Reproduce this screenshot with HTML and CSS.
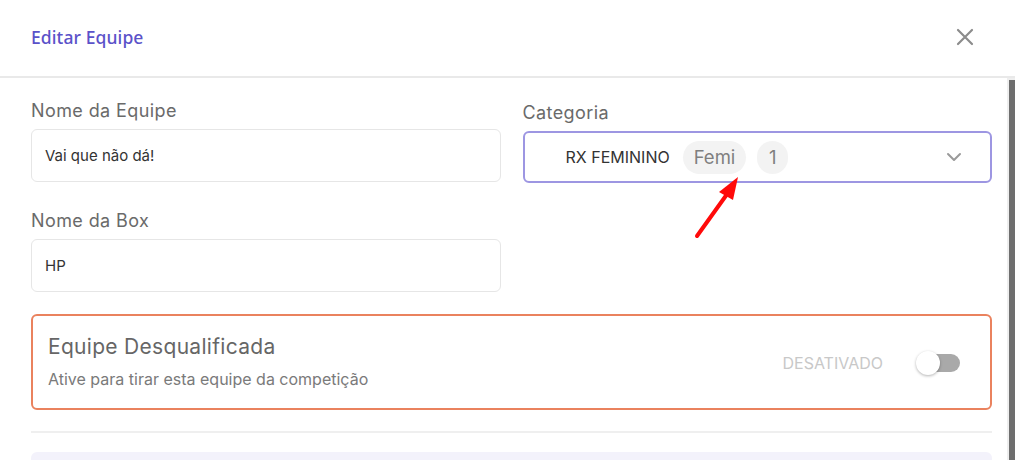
FILE: index.html
```html
<!DOCTYPE html>
<html lang="pt-BR">
<head>
<meta charset="utf-8">
<title>Editar Equipe</title>
<link rel="stylesheet" href="styles.css">
</head>
<body>
<div class="modal">
  <header class="modal-header">
    <h2 class="modal-title">Editar Equipe</h2>
    <button class="close-btn" aria-label="Fechar">
      <svg width="18" height="18" viewBox="0 0 18 18"><path d="M2 2 L16 16 M16 2 L2 16" stroke="#8c8c8c" stroke-width="2.2" stroke-linecap="round" fill="none"/></svg>
    </button>
  </header>
  <div class="modal-body">
    <div class="content">
      <div class="fields">
        <div class="field">
          <label class="field-label">Nome da Equipe</label>
          <div class="input">Vai que não dá!</div>
        </div>
        <div class="field field-right">
          <label class="field-label">Categoria</label>
          <div class="select">
            <span class="select-value">RX FEMININO</span>
            <span class="chip">Femi</span>
            <span class="chip chip-round">1</span>
            <svg class="chevron" width="16" height="10" viewBox="0 0 16 10"><path d="M2 2 L8 8 L14 2" stroke="#9a9a9a" stroke-width="2" fill="none" stroke-linecap="round" stroke-linejoin="round"/></svg>
          </div>
        </div>
        <div class="field">
          <label class="field-label">Nome da Box</label>
          <div class="input">HP</div>
        </div>
      </div>
      <div class="danger-card">
        <div class="danger-text">
          <div class="danger-title">Equipe Desqualificada</div>
          <div class="danger-sub">Ative para tirar esta equipe da competição</div>
        </div>
        <div class="toggle-wrap">
          <span class="toggle-label">DESATIVADO</span>
          <span class="toggle"><span class="knob"></span></span>
        </div>
      </div>
      <div class="divider"></div>
      <div class="footer-box"></div>
    </div>
    <div class="scrollbar"><div class="scroll-thumb"></div></div>
  </div>
  <svg class="annotation-arrow" width="60" height="72" viewBox="0 0 60 72">
    <path d="M7 64 L40 18" stroke="#ff0a0a" stroke-width="4" stroke-linecap="round" fill="none"/>
    <path d="M48 5 L29 20 L43 28 Z" fill="#ff0a0a"/>
  </svg>
</div>
</body>
</html>
```
FILE: styles.css
```css
* { box-sizing: border-box; }
html, body { margin: 0; padding: 0; background: #fff; }
body { font-family: Inter, "Noto Sans", "Liberation Sans", sans-serif; color: #333; }

.modal {
  position: relative;
  width: 1015px;
  height: 460px;
  display: flex;
  flex-direction: column;
  background: #fff;
  overflow: hidden;
}

.modal-header {
  flex: 0 0 auto;
  height: 78px;
  border-bottom: 2px solid #e9e9e9;
  display: flex;
  align-items: center;
  justify-content: space-between;
  padding: 0 41px 2px 31px;
}
.modal-title {
  margin: 0;
  font-family: "Noto Sans", Inter, sans-serif;
  font-weight: 500;
  font-size: 17.5px;
  color: #5b52c9;
  letter-spacing: 0.1px;
}
.close-btn {
  border: 0;
  background: none;
  padding: 0;
  width: 18px;
  height: 18px;
  display: flex;
}

.modal-body {
  flex: 1 1 auto;
  display: flex;
  min-height: 0;
}
.content {
  flex: 1 1 auto;
  min-width: 0;
  overflow: hidden;
  padding: 21px 15px 0 31px;
}
.scrollbar {
  flex: 0 0 8px;
  background: #eeeeee;
  padding: 2px 0 0 2px;
  display: flex;
}
.scroll-thumb {
  flex: 1;
  background: #6e6e6e;
}

.fields {
  display: grid;
  grid-template-columns: 1fr 1fr;
  column-gap: 22px;
  row-gap: 26px;
  align-items: start;
}
.field { display: flex; flex-direction: column; }
.field-right { padding-top: 2px; }
.field-label {
  font-size: 18px;
  letter-spacing: 0.4px;
  line-height: 24px;
  color: #6a6a6a;
  margin-bottom: 6px;
}
.input {
  height: 53px;
  border: 1px solid #e6e6e6;
  border-radius: 6px;
  padding: 0 13px;
  display: flex;
  align-items: center;
  font-size: 15px;
  color: #333;
}
.select {
  height: 52px;
  border: 2px solid #9d96e2;
  border-radius: 6px;
  padding: 0 28px 0 41px;
  display: flex;
  align-items: center;
  gap: 11px;
}
.select-value {
  font-size: 16px;
  color: #333;
  margin-right: 2px;
}
.chip {
  height: 33px;
  padding: 0 11px;
  border-radius: 17px;
  background: #f3f3f3;
  color: #7f7f7f;
  font-size: 18.5px;
  display: flex;
  align-items: center;
}
.chip-round {
  width: 31px;
  padding: 0;
  justify-content: center;
}
.chevron { margin-left: auto; }

.danger-card {
  margin-top: 22px;
  height: 96px;
  border: 2px solid #ea825e;
  border-radius: 6px;
  padding: 16px 30px 18px 15px;
  display: flex;
  align-items: center;
  justify-content: space-between;
}
.danger-title {
  font-size: 21px;
  letter-spacing: 0.3px;
  line-height: 28px;
  color: #666;
}
.danger-sub {
  margin-top: 8px;
  font-size: 16px;
  line-height: 20px;
  color: #7a7a7a;
}
.toggle-wrap {
  display: flex;
  align-items: center;
  gap: 34px;
  margin-top: 4px;
}
.toggle-label {
  font-size: 16px;
  color: #c8c8c8;
}
.toggle {
  position: relative;
  width: 43px;
  height: 18px;
  border-radius: 9px;
  background: #a9a9a9;
  display: block;
}
.knob {
  position: absolute;
  left: -1px;
  top: -3px;
  width: 24px;
  height: 24px;
  border-radius: 50%;
  background: #fff;
  box-shadow: 0 1px 3px rgba(0,0,0,0.3);
}

.divider {
  margin-top: 21px;
  height: 2px;
  background: #efefef;
}
.footer-box {
  margin-top: 19px;
  height: 14px;
  border-radius: 6px 6px 0 0;
  background: #f3f2fb;
}

.annotation-arrow {
  position: absolute;
  left: 690px;
  top: 172px;
}
```
